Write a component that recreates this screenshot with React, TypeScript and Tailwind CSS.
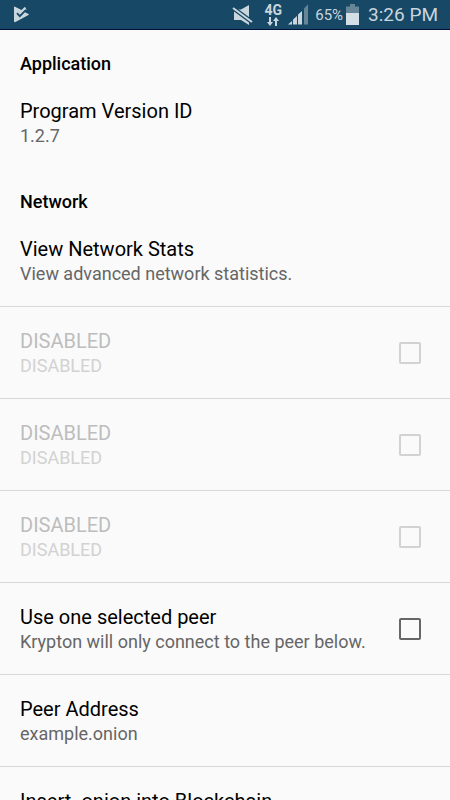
import { useId } from "react";

function StatusBar() {
  return (
    <header className="flex h-[30px] shrink-0 items-center border-b border-[#04103c] bg-[#174866] pr-3 pl-[13px] text-[#c9d6dd]">
      <svg width="17" height="17" viewBox="0 0 17 17" aria-hidden="true">
        <path d="M1 1.200Q1 .2 2 .7L8.500 4 12 .8 13.500 3.500 11.500 6 15.500 8Q16.500 8.500 15.500 9L2.500 16Q1 16.500 1 15Z" fill="#c9d6dd" />
        <path d="M4 7.200 6.800 10.200 13 3.800" fill="none" stroke="#174866" strokeWidth="1.700" />
      </svg>
      <div className="ml-auto flex items-center">
        <svg width="22" height="22" viewBox="0 0 22 22" aria-hidden="true">
          <path d="M2 5.500h7l8-4.500v20l-8-5H2Z" fill="#c9d6dd" />
          <path d="M1 4 20 18" stroke="#174866" strokeWidth="4.500" />
          <path d="M1 4 20 18" stroke="#c9d6dd" strokeWidth="2" />
        </svg>
        <div className="ml-[10px] flex w-[18px] flex-col items-center">
          <span className="text-sm leading-[14px] font-bold">4G</span>
          <svg width="12" height="9" viewBox="0 0 12 9" aria-hidden="true">
            <path d="M2 0h2v5h2L3 9 0 5h2ZM8 9h2V4h2L9 0 6 4h2Z" fill="#c9d6dd" />
          </svg>
        </div>
        <svg className="ml-[6px]" width="21" height="21" viewBox="0 0 21 21" aria-hidden="true">
          <path d="M0 20.500 4 17v3.500ZM5 15.500 9 12v8.500H5ZM10 10.500 14 7v13.500h-4Z" fill="#c9d6dd" />
          <path d="M16 4.500 20 .5v20h-4Z" fill="#668698" />
        </svg>
        <span className="ml-[6px] text-[15px] leading-5">65%</span>
        <svg className="ml-[3px]" width="13" height="21" viewBox="0 0 13 21" aria-hidden="true">
          <path d="M4 0h5v2.500h4V9H0V2.500h4Z" fill="#668698" />
          <path d="M0 9h13v12H0Z" fill="#d3dee6" />
        </svg>
        <span className="ml-[9px] text-[19px] leading-6">3:26 PM</span>
      </div>
    </header>
  );
}

function SectionTitle({ children }: { children: string }) {
  return <h2 className="px-5 pt-[22px] pb-[1px] text-lg leading-6 font-medium text-black">{children}</h2>;
}

type PreferenceProps = {
  title: string;
  summary: string;
  divider?: boolean;
};

function Preference({ title, summary, divider = true }: PreferenceProps) {
  return (
    <button
      type="button"
      className={`block w-full px-5 pt-[21px] pb-5 text-left ${divider ? "border-b border-[#d8d8d8]" : ""}`}
    >
      <span className="block text-xl leading-[26px] text-black">{title}</span>
      <span className="block text-lg leading-6 text-[#666666]">{summary}</span>
    </button>
  );
}

function CheckPreference({ title, summary, disabled = false }: PreferenceProps & { disabled?: boolean }) {
  const id = useId();
  return (
    <div className="flex items-center border-b border-[#d8d8d8] pr-[29px]">
      <label htmlFor={id} className="flex-1 pt-[21px] pb-5 pl-5">
        <span className={`block text-xl leading-[26px] ${disabled ? "text-[#bdbdbd]" : "text-black"}`}>{title}</span>
        <span className={`block text-lg leading-6 ${disabled ? "text-[#d2d2d2]" : "text-[#666666]"}`}>{summary}</span>
      </label>
      <input
        id={id}
        type="checkbox"
        disabled={disabled}
        className={`size-[22px] shrink-0 appearance-none rounded-[2px] border-2 checked:bg-current ${disabled ? "border-[#d2d2d2]" : "border-[#666666]"}`}
      />
    </div>
  );
}

export default function App() {
  return (
    <div className="flex h-screen flex-col overflow-hidden bg-[#fafafa] font-['Roboto',sans-serif]">
      <StatusBar />
      <main className="min-h-0 flex-1 overflow-hidden">
        <section>
          <SectionTitle>Application</SectionTitle>
          <Preference title="Program Version ID" summary="1.2.7" divider={false} />
        </section>
        <section>
          <SectionTitle>Network</SectionTitle>
          <Preference title="View Network Stats" summary="View advanced network statistics." />
          <CheckPreference title="DISABLED" summary="DISABLED" disabled />
          <CheckPreference title="DISABLED" summary="DISABLED" disabled />
          <CheckPreference title="DISABLED" summary="DISABLED" disabled />
          <CheckPreference title="Use one selected peer" summary="Krypton will only connect to the peer below." />
          <Preference title="Peer Address" summary="example.onion" />
          <Preference title="Insert .onion into Blockchain" summary="" />
        </section>
      </main>
    </div>
  );
}
